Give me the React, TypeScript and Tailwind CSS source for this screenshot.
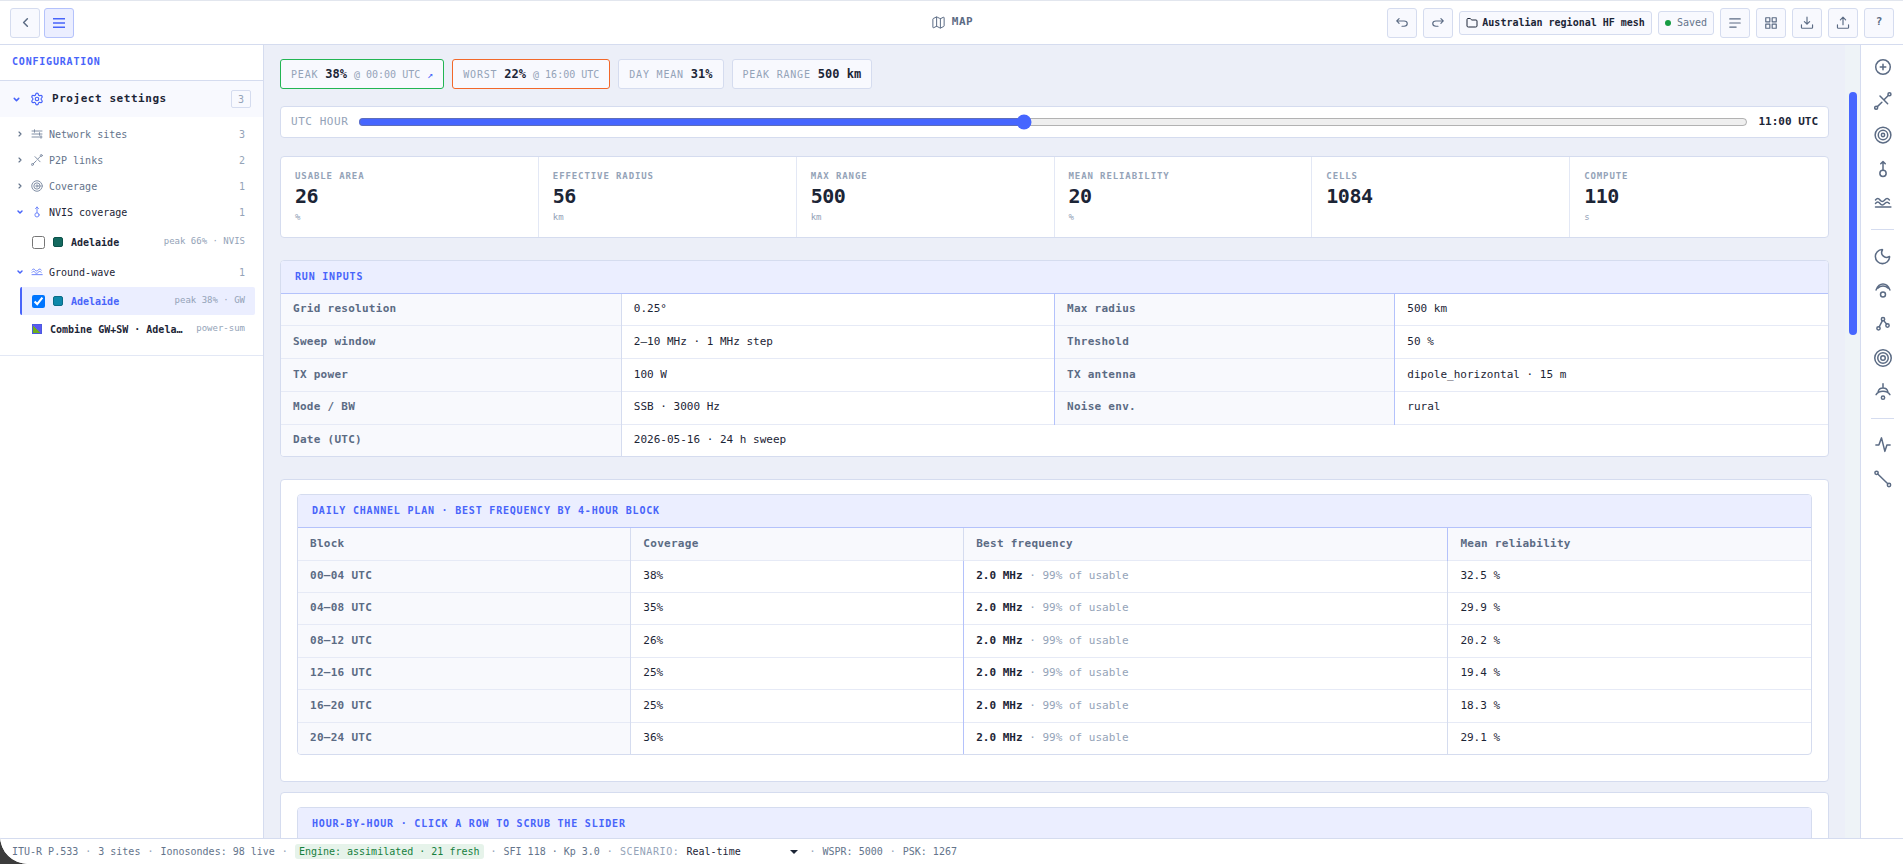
import { useState, type ReactNode } from "react";
import {
  ChevronLeft,
  ChevronDown,
  ChevronRight,
  Folder,
  Map as MapIcon,
  Moon,
  Settings,
} from "lucide-react";

type IconProps = { className?: string };

function Glyph({ className = "size-[18px]", children }: IconProps & { children: ReactNode }) {
  return (
    <svg
      viewBox="0 0 24 24"
      className={className}
      fill="none"
      stroke="currentColor"
      strokeWidth="2"
      strokeLinecap="round"
      strokeLinejoin="round"
      aria-hidden="true"
    >
      {children}
    </svg>
  );
}

const AddSite = (p: IconProps) => (
  <Glyph {...p}>
    <circle cx="12" cy="12" r="9.7" />
    <path d="M12 8.3v7.4M8.3 12h7.4" />
  </Glyph>
);
const Link = (p: IconProps) => (
  <Glyph {...p}>
    <circle cx="2.9" cy="21" r="2" />
    <circle cx="20.6" cy="3" r="2" />
    <path d="M4.5 19.5l6-5.8M8 5.3l10.2 10.3M19 4.6l-5.6 5.7" />
  </Glyph>
);
const Coverage = (p: IconProps) => (
  <Glyph {...p}>
    <circle cx="12" cy="12" r="10.5" />
    <circle cx="12" cy="12" r="6.3" />
    <circle cx="12" cy="12" r="2.2" />
  </Glyph>
);
const Nvis = (p: IconProps) => (
  <Glyph {...p}>
    <circle cx="12" cy="17.8" r="4.2" />
    <path d="M12 13.6V2M9 5l3-3 3 3" />
  </Glyph>
);
const Waves = (p: IconProps) => (
  <Glyph {...p}>
    <path d="M2 8c2-2.6 4-2.6 6 0s4 2.600 6.300 0 4.200-2.300 6.200 0" />
    <path d="M2 12.700c2-2.600 4-2.600 6 0s4 2.600 6.300 0 4.200-2.300 6.200 0" />
    <path d="M2 17.300h20.500" />
  </Glyph>
);
const Skywave = (p: IconProps) => (
  <Glyph {...p}>
    <path d="M2.8 12C7 1.500 17 1.500 21.200 12" />
    <path d="M5 9.500C9 5.500 15 5.500 19 9.500" />
    <circle cx="12" cy="18" r="3.3" />
  </Glyph>
);
const Hops = (p: IconProps) => (
  <Glyph {...p}>
    <circle cx="6" cy="17.8" r="2.200" />
    <circle cx="12" cy="5.500" r="2.200" />
    <circle cx="18" cy="14" r="2.200" />
    <path d="M7 15.700l4.200-8.200M13 7.500l4 4.700" />
  </Glyph>
);
const Rings = (p: IconProps) => (
  <Glyph {...p}>
    <circle cx="12" cy="12" r="11" />
    <circle cx="12" cy="12" r="7" />
    <circle cx="12" cy="12" r="3" />
  </Glyph>
);
const Antenna = (p: IconProps) => (
  <Glyph {...p}>
    <path d="M12 1v5M2.800 15.500C6.500 9.500 17.500 9.500 21.200 15.500M5.500 11.500C7 5 17 5 18.500 11.500" />
    <circle cx="12" cy="19.500" r="2.200" />
  </Glyph>
);
const Pulse = (p: IconProps) => (
  <Glyph {...p}>
    <path d="M2.500 12h4L10 2.500l4.500 18L17.200 12h4.300" />
  </Glyph>
);
const Profile = (p: IconProps) => (
  <Glyph {...p}>
    <circle cx="3.400" cy="3.800" r="2.200" />
    <circle cx="20" cy="20" r="2.200" />
    <path d="M5 5.400L18.400 18.400" />
  </Glyph>
);
const Sites = (p: IconProps) => (
  <Glyph {...p}>
    <path d="M2 6h20M2 12h20M2 18h20M7 3.500v5M17 9.500v5M20 15.500v5" />
  </Glyph>
);
const Undo = (p: IconProps) => (
  <Glyph {...p}>
    <path d="M7 4.500L3 8.500l4 4M3 8.500h12.500c3.500 0 5.500 1.800 5.500 4.500s-2 4.500-5.500 4.500H12" />
  </Glyph>
);
const Redo = (p: IconProps) => (
  <Glyph {...p}>
    <path d="M17 4.500l4 4-4 4M21 8.500H8.500C5 8.500 3 10.300 3 13s2 4.500 5.500 4.500H12" />
  </Glyph>
);
const Lines = (p: IconProps) => (
  <Glyph {...p}>
    <path d="M3 5h18M3 12h18M3 19h11" />
  </Glyph>
);
const Tiles = (p: IconProps) => (
  <Glyph {...p}>
    <path d="M3 3h7v7H3zM14 3h7v7h-7zM3 14h7v7H3zM14 14h7v7h-7z" />
  </Glyph>
);
const Download = (p: IconProps) => (
  <Glyph {...p}>
    <path d="M12 2v12M7.500 9.500L12 14l4.500-4.500M2.500 15v4.500c0 1 .5 1.500 1.500 1.500h16c1 0 1.500-.5 1.500-1.500V15" />
  </Glyph>
);
const Upload = (p: IconProps) => (
  <Glyph {...p}>
    <path d="M12 15V2M7.500 6.500L12 2l4.500 4.500M2.500 15v4.500c0 1 .5 1.500 1.500 1.500h16c1 0 1.500-.5 1.500-1.500V15" />
  </Glyph>
);

function BarButton({ label, children }: { label: string; children: ReactNode }) {
  return (
    <button
      type="button"
      aria-label={label}
      className="flex size-[30px] items-center justify-center rounded-[3px] border border-[#d5dcef] bg-[#f8f9fe] text-[11px] font-bold text-[#5b6b84]"
    >
      {children}
    </button>
  );
}

function TopBar() {
  return (
    <header className="grid h-[45px] shrink-0 grid-cols-[1fr_auto_1fr] items-center border-t border-b border-t-[#e2e6ee] border-b-[#d5dcef] bg-white pr-[9px] pl-[10px]">
      <div className="flex gap-1">
        <BarButton label="Back">
          <ChevronLeft className="size-[15px]" strokeWidth={2.400} />
        </BarButton>
        <button
          type="button"
          aria-label="Toggle menu"
          className="flex size-[30px] items-center justify-center rounded-[3px] border border-[#b4c2fb] bg-[#ebeeff] text-[#4864fa]"
        >
          <svg viewBox="0 0 12 10" className="h-[10px] w-3" fill="currentColor" aria-hidden="true">
            <path d="M0 0h12v1.500H0zM0 4.200h12v1.500H0zM0 8.400h12v1.500H0z" />
          </svg>
        </button>
      </div>
      <h1 className="flex items-center gap-1.5 text-[11px] font-bold tracking-wider text-[#5b6b84]">
        <MapIcon className="size-[15px]" strokeWidth={1.600} />
        MAP
      </h1>
      <div className="flex items-center justify-end gap-1.5">
        <BarButton label="Undo">
          <Undo className="size-[14px]" />
        </BarButton>
        <BarButton label="Redo">
          <Redo className="size-[14px]" />
        </BarButton>
        <button
          type="button"
          className="flex h-6 items-center gap-1 rounded-[3px] border border-[#d5dcef] bg-[#f8f9fe] px-1.5 text-[10px] font-bold whitespace-nowrap text-[#1c2536]"
        >
          <Folder className="size-3" />
          Australian regional HF mesh
        </button>
        <span className="flex h-6 items-center gap-1.5 rounded-[3px] border border-[#d5dcef] bg-[#f8f9fe] px-1.5 text-[10px] text-[#64748b]">
          <span className="size-1.5 rounded-full bg-[#169c43]" />
          Saved
        </span>
        <BarButton label="Log">
          <Lines className="size-[14px]" />
        </BarButton>
        <BarButton label="Panels">
          <Tiles className="size-[14px]" />
        </BarButton>
        <BarButton label="Import">
          <Download className="size-[14px]" />
        </BarButton>
        <BarButton label="Export">
          <Upload className="size-[14px]" />
        </BarButton>
        <BarButton label="Help">?</BarButton>
      </div>
    </header>
  );
}

function TreeGroup({
  icon,
  label,
  count,
  open = false,
}: {
  icon: ReactNode;
  label: string;
  count: number;
  open?: boolean;
}) {
  return (
    <button
      type="button"
      aria-expanded={open}
      className={
        open
          ? "flex h-[26px] w-full items-center pr-[18px] pl-4 text-[10px] text-[#1c2536]"
          : "flex h-[26px] w-full items-center pr-[18px] pl-4 text-[10px] text-[#64748b]"
      }
    >
      {open ? (
        <ChevronDown className="size-2 text-[#4864fa]" strokeWidth={4.500} />
      ) : (
        <ChevronRight className="size-2" strokeWidth={3.500} />
      )}
      <span className={open ? "ml-[7px] text-[#6f86fb]" : "ml-[7px] text-[#8290a6]"}>{icon}</span>
      <span className="ml-1.5">{label}</span>
      <span className="ml-auto text-[#94a3b8]">{count}</span>
    </button>
  );
}

function TreeItem({
  id,
  label,
  meta,
  swatch,
  selected = false,
}: {
  id: string;
  label: string;
  meta: string;
  swatch: string;
  selected?: boolean;
}) {
  const [checked, setChecked] = useState(selected);
  return (
    <div
      className={
        selected
          ? "mr-2 ml-5 flex h-7 items-center rounded-[2px] border-l-2 border-[#4864fa] bg-[#ebeeff] pr-[10px] pl-[10px]"
          : "mr-2 ml-5 flex h-7 items-center border-l-2 border-transparent pr-[10px] pl-[10px]"
      }
    >
      <input
        id={id}
        type="checkbox"
        checked={checked}
        onChange={(e) => setChecked(e.target.checked)}
        className="size-[13px]"
      />
      <span className={swatch} />
      <label
        htmlFor={id}
        className={
          selected ? "ml-2 text-[10px] font-bold text-[#4864fa]" : "ml-2 text-[10px] font-bold text-[#1c2536]"
        }
      >
        {label}
      </label>
      <span className="ml-auto text-[9px] text-[#94a3b8]">{meta}</span>
    </div>
  );
}

function Sidebar() {
  return (
    <aside className="w-[264px] shrink-0 border-r border-[#d5dcef] bg-white">
      <h2 className="flex h-9 items-center border-b border-[#d5dcef] px-3 pb-0.5 text-[10px] font-bold tracking-[0.08em] text-[#4864fa]">
        CONFIGURATION
      </h2>
      <div className="border-b border-[#e3e8f5] pb-3">
        <button
          type="button"
          aria-expanded="true"
          className="flex h-9 w-full items-center bg-[#f8f9fe] pr-3 pl-3"
        >
          <ChevronDown className="size-[9px] text-[#4864fa]" strokeWidth={4} />
          <Settings className="ml-[9px] size-[14px] text-[#4864fa]" />
          <span className="ml-2 text-[11px] font-bold tracking-wider text-[#1c2536]">Project settings</span>
          <span className="ml-auto flex h-[18px] w-5 items-center justify-center rounded-[2px] border border-[#d5dcef] text-[10px] text-[#94a3b8]">
            3
          </span>
        </button>
        <div className="pt-1">
          <TreeGroup icon={<Sites className="size-3" />} label="Network sites" count={3} />
          <TreeGroup icon={<Link className="size-3" />} label="P2P links" count={2} />
          <TreeGroup icon={<Coverage className="size-3" />} label="Coverage" count={1} />
          <TreeGroup icon={<Nvis className="size-3" />} label="NVIS coverage" count={1} open />
          <div className="py-[3px]">
            <TreeItem
              id="nvis-adelaide"
              label="Adelaide"
              meta="peak 66% · NVIS"
              swatch="ml-2 size-[10px] rounded-[2px] border border-[#0b524a] bg-[#14695f]"
            />
          </div>
          <TreeGroup icon={<Waves className="size-3" />} label="Ground-wave" count={1} open />
          <div className="pt-0.5">
            <TreeItem
              id="gw-adelaide"
              label="Adelaide"
              meta="peak 38% · GW"
              swatch="ml-2 size-[10px] rounded-[2px] border border-[#0b6c87] bg-[#0f88aa]"
              selected
            />
          </div>
          <div className="flex h-7 items-center pr-[18px] pl-8">
            <span className="size-[10px] shrink-0 border border-[#4d5ae0] bg-linear-to-tr from-[#6fae1c] from-50% to-[#5a5af2] to-50% bg-no-repeat bg-origin-border" />
            <span className="ml-2 text-[10px] font-bold whitespace-nowrap text-[#1c2536]">
              Combine GW+SW · Adela…
            </span>
            <span className="ml-auto text-[9px] text-[#94a3b8]">power-sum</span>
          </div>
        </div>
      </div>
    </aside>
  );
}

function Chip({
  label,
  value,
  tone = "plain",
  children,
}: {
  label: string;
  value: string;
  tone?: "plain" | "good" | "bad";
  children?: ReactNode;
}) {
  const tones = {
    plain: "border-[#d5dcef]",
    good: "border-[#22b553]",
    bad: "border-[#f2682a]",
  };
  return (
    <div
      className={`flex h-[30px] items-center gap-[7px] rounded-[3px] border bg-[#f8f9fe] px-[10px] text-[10px] text-[#94a3b8] ${tones[tone]}`}
    >
      <span className="tracking-[0.08em]">{label}</span>
      <strong className="text-[12px] text-[#1c2536]">{value}</strong>
      {children}
    </div>
  );
}

const stats = [
  ["USABLE AREA", "26", "%"],
  ["EFFECTIVE RADIUS", "56", "km"],
  ["MAX RANGE", "500", "km"],
  ["MEAN RELIABILITY", "20", "%"],
  ["CELLS", "1084", ""],
  ["COMPUTE", "110", "s"],
];

const inputs = [
  ["Grid resolution", "0.25°", "Max radius", "500 km"],
  ["Sweep window", "2–10 MHz · 1 MHz step", "Threshold", "50 %"],
  ["TX power", "100 W", "TX antenna", "dipole_horizontal · 15 m"],
  ["Mode / BW", "SSB · 3000 Hz", "Noise env.", "rural"],
];

const plan = [
  ["00–04 UTC", "38%", "32.5 %"],
  ["04–08 UTC", "35%", "29.9 %"],
  ["08–12 UTC", "26%", "20.2 %"],
  ["12–16 UTC", "25%", "19.4 %"],
  ["16–20 UTC", "25%", "18.3 %"],
  ["20–24 UTC", "36%", "29.1 %"],
];

const panel = "overflow-hidden rounded-[4px] border border-[#d5dcef] bg-white";
const panelTitle =
  "flex h-[33px] items-center border-b border-[#b4c2fb] bg-[#ebeeff] px-[14px] pb-0.5 text-[10px] font-bold tracking-[0.08em] text-[#4864fa]";
const rowHead = "bg-[#f8f9fd] px-3 text-left font-bold tracking-wide text-[#5b6b84]";

function Content() {
  const [hour, setHour] = useState(11);
  return (
    <main className="min-w-0 flex-1 overflow-hidden px-4 pt-[14px]">
      <div className="flex gap-2">
        <Chip label="PEAK" value="38%" tone="good">
          <span>@ 00:00 UTC</span>
          <a href="#peak" aria-label="Jump to peak" className="text-[#4864fa]">
            ↗
          </a>
        </Chip>
        <Chip label="WORST" value="22%" tone="bad">
          <span>@ 16:00 UTC</span>
        </Chip>
        <Chip label="DAY MEAN" value="31%" />
        <Chip label="PEAK RANGE" value="500 km" />
      </div>

      <div className="mt-[17px] flex h-8 items-center gap-[10px] rounded-[4px] border border-[#d5dcef] bg-white px-[10px] text-[11px]">
        <label htmlFor="hour" className="tracking-wider whitespace-nowrap text-[#94a3b8]">
          UTC HOUR
        </label>
        <input
          id="hour"
          type="range"
          min={0}
          max={23}
          value={hour}
          onChange={(e) => setHour(Number(e.target.value))}
          className="min-w-0 flex-1 accent-[#4666ff]"
        />
        <output htmlFor="hour" className="font-bold whitespace-nowrap text-[#1c2536]">
          {String(hour).padStart(2, "0")}:00 UTC
        </output>
      </div>

      <dl className="mt-[18px] grid grid-cols-6 divide-x divide-[#e3e8f5] overflow-hidden rounded-[4px] border border-[#d5dcef] bg-white">
        {stats.map(([label, value, unit]) => (
          <div key={label} className="h-20 px-[14px] pt-[13px]">
            <dt className="text-[9px] leading-3 font-bold tracking-widest text-[#94a3b8]">{label}</dt>
            <dd>
              <div className="text-[20px] leading-7 font-bold tracking-tight text-[#1c2536]">{value}</div>
              <div className="text-[9px] leading-[14px] text-[#94a3b8]">{unit}</div>
            </dd>
          </div>
        ))}
      </dl>

      <section className={`mt-[22px] ${panel}`}>
        <h3 className={panelTitle}>RUN INPUTS</h3>
        <table className="h-[162px] w-full table-fixed text-[11px] text-[#1c2536]">
          <colgroup>
            <col className="w-[22%]" />
            <col className="w-[28%]" />
            <col className="w-[22%]" />
            <col className="w-[28%]" />
          </colgroup>
          <tbody className="divide-y divide-[#e6eaf6]">
            {inputs.map(([a, b, c, d]) => (
              <tr key={a}>
                <th scope="row" className={`border-r border-r-[#d5dcef] ${rowHead}`}>{a}</th>
                <td className="px-3">{b}</td>
                <th scope="row" className={`border-x border-x-[#b4c2fb] ${rowHead}`}>{c}</th>
                <td className="px-3">{d}</td>
              </tr>
            ))}
            <tr>
              <th scope="row" className={`border-r border-r-[#d5dcef] ${rowHead}`}>Date (UTC)</th>
              <td className="px-3" colSpan={3}>2026-05-16 · 24 h sweep</td>
            </tr>
          </tbody>
        </table>
      </section>

      <div className={`mt-[22px] px-4 pt-[14px] pb-[26px] ${panel}`}>
        <section className={panel}>
          <h3 className={panelTitle}>DAILY CHANNEL PLAN · BEST FREQUENCY BY 4-HOUR BLOCK</h3>
          <table className="h-[226px] w-full table-fixed text-[11px] text-[#1c2536]">
            <colgroup>
              <col className="w-[22%]" />
              <col className="w-[22%]" />
              <col className="w-[32%]" />
              <col className="w-[24%]" />
            </colgroup>
            <thead>
              <tr className="h-8">
                <th scope="col" className={`border-r border-r-[#d5dcef] ${rowHead}`}>Block</th>
                <th scope="col" className={`border-r border-r-[#d5dcef] ${rowHead}`}>Coverage</th>
                <th scope="col" className={`border-r border-r-[#b4c2fb] ${rowHead}`}>Best frequency</th>
                <th scope="col" className={rowHead}>Mean reliability</th>
              </tr>
            </thead>
            <tbody className="divide-y divide-[#e6eaf6] border-t border-[#e6eaf6]">
              {plan.map(([block, coverage, mean]) => (
                <tr key={block}>
                  <th scope="row" className={`border-r border-r-[#d5dcef] ${rowHead}`}>{block}</th>
                  <td className="border-r border-r-[#b4c2fb] px-3">{coverage}</td>
                  <td className="border-r border-r-[#d5dcef] px-3 text-[#94a3b8]">
                    <strong className="text-[#1c2536]">2.0 MHz</strong> · 99% of usable
                  </td>
                  <td className="px-3">{mean}</td>
                </tr>
              ))}
            </tbody>
          </table>
        </section>
      </div>

      <div className={`mt-[10px] px-4 pt-[14px] ${panel}`}>
        <section className={panel}>
          <h3 className={panelTitle}>HOUR-BY-HOUR · CLICK A ROW TO SCRUB THE SLIDER</h3>
          <div className="h-10" />
        </section>
      </div>
    </main>
  );
}

function Tool({ label, children }: { label: string; children: ReactNode }) {
  return (
    <button type="button" aria-label={label} className="flex h-[34px] w-full items-center justify-center">
      {children}
    </button>
  );
}

function ToolRail() {
  return (
    <nav
      aria-label="Tools"
      className="flex w-[43px] shrink-0 flex-col items-center border-l border-[#d5dcef] bg-white pt-[5px] pl-px text-[#5b6b84]"
    >
      <Tool label="Add site"><AddSite /></Tool>
      <Tool label="P2P link"><Link /></Tool>
      <Tool label="Coverage"><Coverage /></Tool>
      <Tool label="NVIS"><Nvis /></Tool>
      <Tool label="Ground-wave"><Waves /></Tool>
      <hr className="my-[9px] w-[23px] border-[#d5dcef]" />
      <Tool label="Night"><Moon className="size-[19px]" strokeWidth={1.900} /></Tool>
      <Tool label="Sky-wave"><Skywave /></Tool>
      <Tool label="Hops"><Hops /></Tool>
      <Tool label="Range rings"><Rings /></Tool>
      <Tool label="Antenna"><Antenna /></Tool>
      <hr className="my-[9px] w-[23px] border-[#d5dcef]" />
      <Tool label="Pulse"><Pulse /></Tool>
      <Tool label="Path profile"><Profile /></Tool>
    </nav>
  );
}

function Dot() {
  return <span className="text-[#94a3b8]">·</span>;
}

function StatusBar() {
  return (
    <footer className="flex h-[26px] shrink-0 items-center gap-[7px] border-t border-[#d5dcef] bg-white px-3 text-[10px] whitespace-nowrap text-[#64748b]">
      <span>ITU-R P.533</span>
      <Dot />
      <span>3 sites</span>
      <Dot />
      <span>Ionosondes: 98 live</span>
      <Dot />
      <span className="rounded-[3px] bg-[#e6f3ea] px-1 text-[#15803d]">Engine: assimilated · 21 fresh</span>
      <Dot />
      <span>SFI 118 · Kp 3.0</span>
      <Dot />
      <label htmlFor="scenario" className="tracking-[0.06em] text-[#94a3b8]">SCENARIO:</label>
      <span className="relative flex items-center">
        <select id="scenario" defaultValue="Real-time" className="w-[116px] appearance-none text-[#1c2536]">
          <option>Real-time</option>
          <option>Forecast</option>
        </select>
        <svg
          viewBox="0 0 8 4"
          className="pointer-events-none absolute right-1 h-1 w-2"
          fill="#1c2536"
          aria-hidden="true"
        >
          <path d="M0 0h8L4 4z" />
        </svg>
      </span>
      <Dot />
      <span>WSPR: 5000</span>
      <Dot />
      <span>PSK: 1267</span>
    </footer>
  );
}

export default function App() {
  return (
    <div className="bg-[#3c3c3c] font-['DejaVu_Sans_Mono',monospace]">
      <div className="flex h-screen flex-col overflow-hidden rounded-bl-[28px] bg-white">
        <TopBar />
        <div className="flex min-h-0 flex-1 bg-[#eceff8]">
          <Sidebar />
          <Content />
          <div className="flex w-[15px] shrink-0 justify-center bg-[#eef3f7] pt-[47px]">
            <div className="h-[243px] w-2 rounded-full bg-[#4666ff]" />
          </div>
          <ToolRail />
        </div>
        <StatusBar />
      </div>
    </div>
  );
}
